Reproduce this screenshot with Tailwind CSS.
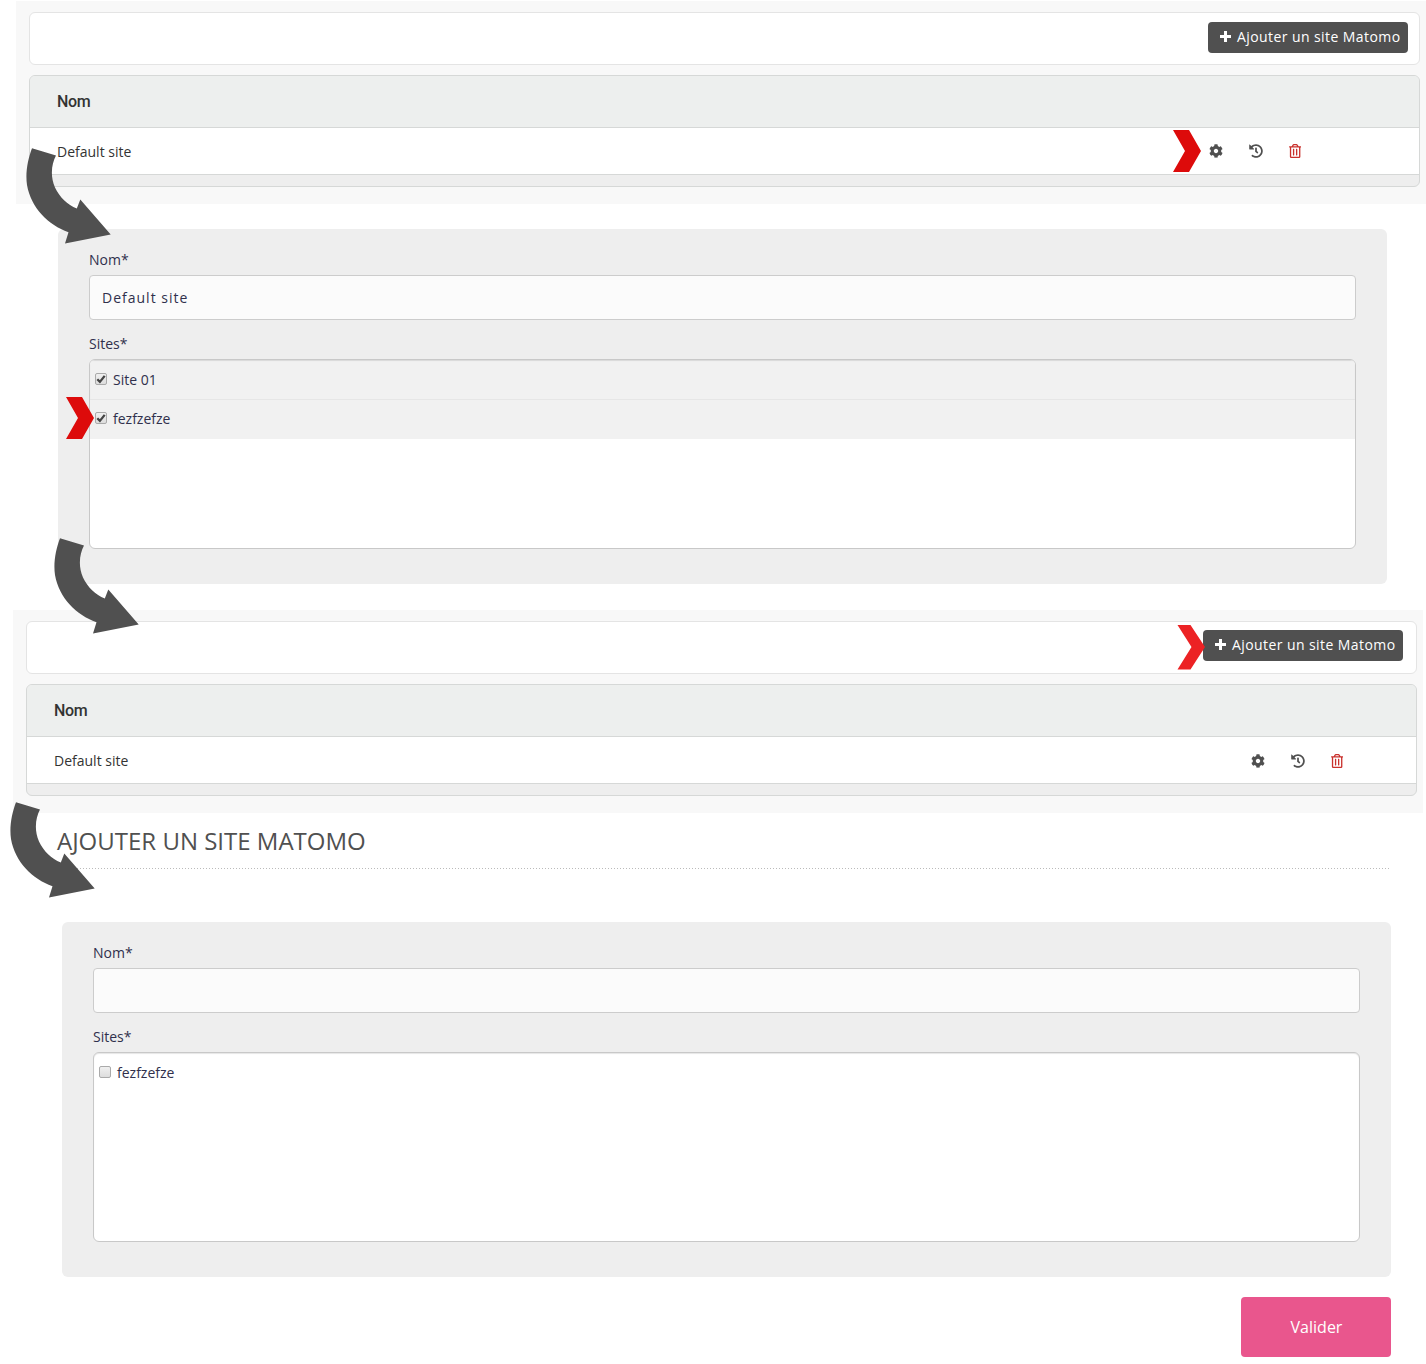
<!DOCTYPE html>
<html lang="fr">
<head>
<meta charset="utf-8">
<title>Sites Matomo</title>
<script src="https://cdn.jsdelivr.net/npm/@tailwindcss/browser@4"></script>
</head>
<body class="relative w-[1426px] h-[1364px] overflow-hidden bg-white font-['Open_Sans',sans-serif] text-sm leading-5 text-[#333]">

<svg class="hidden">
  <symbol id="cog" viewBox="0 0 512 512"><path d="M487.4 315.7l-42.6-24.6c4.3-23.2 4.3-47 0-70.2l42.6-24.6c4.9-2.8 7.1-8.6 5.5-14-11.1-35.6-30-67.8-54.7-94.6-3.8-4.1-10-5.1-14.8-2.3L380.8 110c-17.9-15.4-38.5-27.3-60.8-35.1V25.8c0-5.6-3.9-10.5-9.4-11.7-36.7-8.2-74.3-7.8-109.2 0-5.5 1.2-9.4 6.1-9.4 11.7V75c-22.2 7.9-42.8 19.8-60.8 35.1L88.7 85.5c-4.9-2.8-11-1.9-14.8 2.3-24.7 26.7-43.6 58.9-54.7 94.6-1.7 5.4.6 11.2 5.5 14L67.3 221c-4.3 23.2-4.3 47 0 70.2l-42.6 24.6c-4.9 2.8-7.1 8.6-5.5 14 11.1 35.6 30 67.8 54.7 94.6 3.8 4.1 10 5.1 14.8 2.3l42.6-24.6c17.9 15.4 38.5 27.3 60.8 35.1v49.2c0 5.6 3.9 10.5 9.4 11.7 36.7 8.2 74.3 7.8 109.2 0 5.5-1.2 9.4-6.1 9.4-11.7v-49.2c22.2-7.9 42.8-19.8 60.8-35.1l42.6 24.6c4.9 2.8 11 1.9 14.8-2.3 24.7-26.7 43.6-58.9 54.7-94.6 1.5-5.5-.7-11.3-5.6-14.1zM256 336c-44.1 0-80-35.9-80-80s35.9-80 80-80 80 35.9 80 80-35.9 80-80 80z"/></symbol>
  <symbol id="history" viewBox="0 0 512 512"><path d="M504 255.531c.253 136.64-111.18 248.372-247.82 248.468-59.015.042-113.223-20.53-155.822-54.911-11.077-8.94-11.905-25.541-1.839-35.607l11.267-11.267c8.609-8.609 22.353-9.551 31.891-1.984C173.062 425.135 212.781 440 256 440c101.705 0 184-82.311 184-184 0-101.705-82.311-184-184-184-48.814 0-93.149 18.969-126.068 49.932l50.754 50.754c10.08 10.08 2.941 27.314-11.313 27.314H24c-8.837 0-16-7.163-16-16V38.627c0-14.254 17.234-21.393 27.314-11.314l49.372 49.372C129.209 34.136 189.552 8 256 8c136.81 0 247.747 110.78 248 247.531zm-180.912 78.784l9.823-12.63c8.138-10.463 6.253-25.542-4.21-33.679L288 256.349V152c0-13.255-10.745-24-24-24h-16c-13.255 0-24 10.745-24 24v135.651l65.409 50.874c10.463 8.137 25.541 6.253 33.679-4.21z"/></symbol>
  <symbol id="trash" viewBox="0 0 448 512"><path d="M268 416h24a12 12 0 0 0 12-12V188a12 12 0 0 0-12-12h-24a12 12 0 0 0-12 12v216a12 12 0 0 0 12 12zM432 80h-82.41l-34-56.7A48 48 0 0 0 274.41 0H173.59a48 48 0 0 0-41.16 23.3L98.41 80H16A16 16 0 0 0 0 96v16a16 16 0 0 0 16 16h16v336a48 48 0 0 0 48 48h288a48 48 0 0 0 48-48V128h16a16 16 0 0 0 16-16V96a16 16 0 0 0-16-16zM171.84 50.91A6 6 0 0 1 177 48h94a6 6 0 0 1 5.15 2.91L293.61 80H154.39zM368 464H80V128h288zm-212-48h24a12 12 0 0 0 12-12V188a12 12 0 0 0-12-12h-24a12 12 0 0 0-12 12v216a12 12 0 0 0 12 12z"/></symbol>
  <symbol id="plus" viewBox="0 0 11 11"><path d="M4 0h3v4h4v3H7v4H4V7H0V4h4z"/></symbol>
  <symbol id="check" viewBox="0 0 10 10"><path d="M1.3 5.3 3.9 7.9 8.7 1.9" fill="none" stroke="#444" stroke-width="2.3"/></symbol>
  <symbol id="arrow" viewBox="0 0 86 97"><path d="M6 1.200 30 8.500C25.500 17 24 29 29 40.500 33.500 50 41.500 58 50.800 61.500L54.300 52.500 84.700 87.500 39 96.500 42.500 85.200C22.500 78 5 61 1 38-.8 26 1.800 12 6 1.200z"/></symbol>
  <symbol id="chevron" viewBox="0 0 28 42"><path d="M0 0h16l12 21-12 21H0l12-21z"/></symbol>
</svg>

<!-- Site list -->
<section class="mt-px ml-4 h-[203px] w-[1410px] bg-[#f8f8f8] pt-[11px] pl-[13px]">
  <div class="flex h-[53px] w-[1391px] items-start justify-end rounded-md border border-[#e4e4e4] bg-white pt-[9px] pr-[11px]">
    <button class="flex h-[31px] w-[200px] items-center rounded bg-[#505050] pb-0.5 pl-3 tracking-[0.42px] whitespace-nowrap text-white"><svg class="mr-1.5 size-[11px] shrink-0 fill-white"><use href="#plus"/></svg><span>Ajouter un site Matomo</span></button>
  </div>
  <div class="mt-2.5 h-28 w-[1391px] overflow-hidden rounded-md border border-[#d6d8d7] bg-[#eee]">
    <div class="flex h-[52px] items-center border-b border-[#d6d8d7] bg-[#edefee] pl-[27px] font-['Roboto',sans-serif] text-base font-medium tracking-[-0.3px]">Nom</div>
    <div class="flex h-[47px] items-center border-b border-[#d6d8d7] bg-white pr-[118px] pl-[27px]">
      <span class="pt-0.5">Default site</span>
      <div class="ml-auto flex items-center gap-[26px] fill-[#505050]">
        <svg class="size-3.5"><use href="#cog"/></svg>
        <svg class="size-3.5"><use href="#history"/></svg>
        <svg class="h-3.5 w-[12.25px] fill-[#c9302c]"><use href="#trash"/></svg>
      </div>
    </div>
  </div>
</section>

<!-- Edit form -->
<section class="mt-[25px] ml-[58px] h-[355px] w-[1329px] rounded-md bg-[#eee] px-[31px] pt-[21px] text-[#30304c]">
  <div class="h-[25px]">Nom*</div>
  <div class="flex h-[45px] items-center rounded border border-[#ccc] bg-[#fbfbfb] pl-3 tracking-[1px]">Default site</div>
  <div class="h-[39px] pt-3.5">Sites*</div>
  <div class="h-[190px] overflow-hidden rounded-md border border-[#c8c8c8] bg-white">
    <div class="flex h-10 items-center gap-1.5 border-b border-[#e6e6e6] bg-[#f1f1f1] pl-[5px] shadow-[inset_0_1px_1px_rgba(0,0,0,0.1)]">
      <span class="mb-0.5 flex size-3 items-center justify-center rounded-[2px] border border-[#aaa] bg-linear-to-b from-[#f0f0f0] to-[#ddd]"><svg class="size-2.5 shrink-0"><use href="#check"/></svg></span><span>Site 01</span>
    </div>
    <div class="flex h-[39px] items-center gap-1.5 bg-[#f1f1f1] pb-0.5 pl-[5px]">
      <span class="mb-0.5 flex size-3 items-center justify-center rounded-[2px] border border-[#aaa] bg-linear-to-b from-[#f0f0f0] to-[#ddd]"><svg class="size-2.5 shrink-0"><use href="#check"/></svg></span><span>fezfzefze</span>
    </div>
  </div>
</section>

<!-- Site list after update -->
<section class="mt-[26px] ml-[13px] h-[203px] w-[1410px] bg-[#f8f8f8] pt-[11px] pl-[13px]">
  <div class="flex h-[53px] w-[1391px] items-start justify-end rounded-md border border-[#e4e4e4] bg-white pt-2 pr-[13px]">
    <button class="flex h-[31px] w-[200px] items-center rounded bg-[#505050] pb-0.5 pl-3 tracking-[0.42px] whitespace-nowrap text-white"><svg class="mr-1.5 size-[11px] shrink-0 fill-white"><use href="#plus"/></svg><span>Ajouter un site Matomo</span></button>
  </div>
  <div class="mt-2.5 h-28 w-[1391px] overflow-hidden rounded-md border border-[#d6d8d7] bg-[#eee]">
    <div class="flex h-[52px] items-center border-b border-[#d6d8d7] bg-[#edefee] pl-[27px] font-['Roboto',sans-serif] text-base font-medium tracking-[-0.3px]">Nom</div>
    <div class="flex h-[47px] items-center border-b border-[#d6d8d7] bg-white pr-[73px] pl-[27px]">
      <span class="pt-0.5">Default site</span>
      <div class="ml-auto flex items-center gap-[26px] fill-[#505050] pt-px">
        <svg class="size-3.5"><use href="#cog"/></svg>
        <svg class="size-3.5"><use href="#history"/></svg>
        <svg class="h-3.5 w-[12.25px] fill-[#c9302c]"><use href="#trash"/></svg>
      </div>
    </div>
  </div>
</section>

<!-- Creation form -->
<h1 class="ml-[57px] flex h-[55px] items-center text-2xl text-[#505050]">AJOUTER UN SITE MATOMO</h1>
<div class="ml-14 h-px w-[1334px] bg-[repeating-linear-gradient(to_right,#bbb_0_1px,transparent_1px_3px)]"></div>
<section class="mt-[53px] ml-[62px] h-[355px] w-[1329px] rounded-md bg-[#eee] px-[31px] pt-[21px] text-[#30304c]">
  <div class="h-[25px]">Nom*</div>
  <div class="h-[45px] rounded border border-[#ccc] bg-[#fbfbfb]"></div>
  <div class="h-[39px] pt-3.5">Sites*</div>
  <div class="h-[190px] overflow-hidden rounded-md border border-[#c8c8c8] bg-white shadow-[inset_0_1px_1px_rgba(0,0,0,0.1)]">
    <div class="flex h-[39px] items-center gap-1.5 pl-[5px]">
      <span class="mb-0.5 size-3 rounded-[2px] border border-[#aaa] bg-linear-to-b from-[#f0f0f0] to-[#ddd]"></span><span>fezfzefze</span>
    </div>
  </div>
</section>
<button class="mt-5 ml-[1241px] flex h-[60px] w-[150px] items-center justify-center rounded-[4px] bg-[#e9568d] pl-px text-base text-white">Valider</button>

<!-- Step arrows and markers laid over the panels -->
<svg class="absolute top-[147px] left-[26px] h-[97px] w-[86px] fill-[#505050]"><use href="#arrow"/></svg>
<svg class="absolute top-[537px] left-[54px] h-[97px] w-[86px] fill-[#505050]"><use href="#arrow"/></svg>
<svg class="absolute top-[801px] left-[10px] h-[97px] w-[86px] fill-[#505050]"><use href="#arrow"/></svg>
<svg class="absolute top-[130px] left-[1173px] h-[42px] w-7 fill-[#dd0b0b]"><use href="#chevron"/></svg>
<svg class="absolute top-[397px] left-[66px] h-[42px] w-7 fill-[#dd0b0b]"><use href="#chevron"/></svg>
<svg class="absolute top-[625px] left-[1177px] h-[45px] w-[28px] fill-[#ec2224]" viewBox="0 0 28 45"><path d="M.5 0H13.500L28 22 13.500 44.500H.5L14.500 22z"/></svg>
</body>
</html>
